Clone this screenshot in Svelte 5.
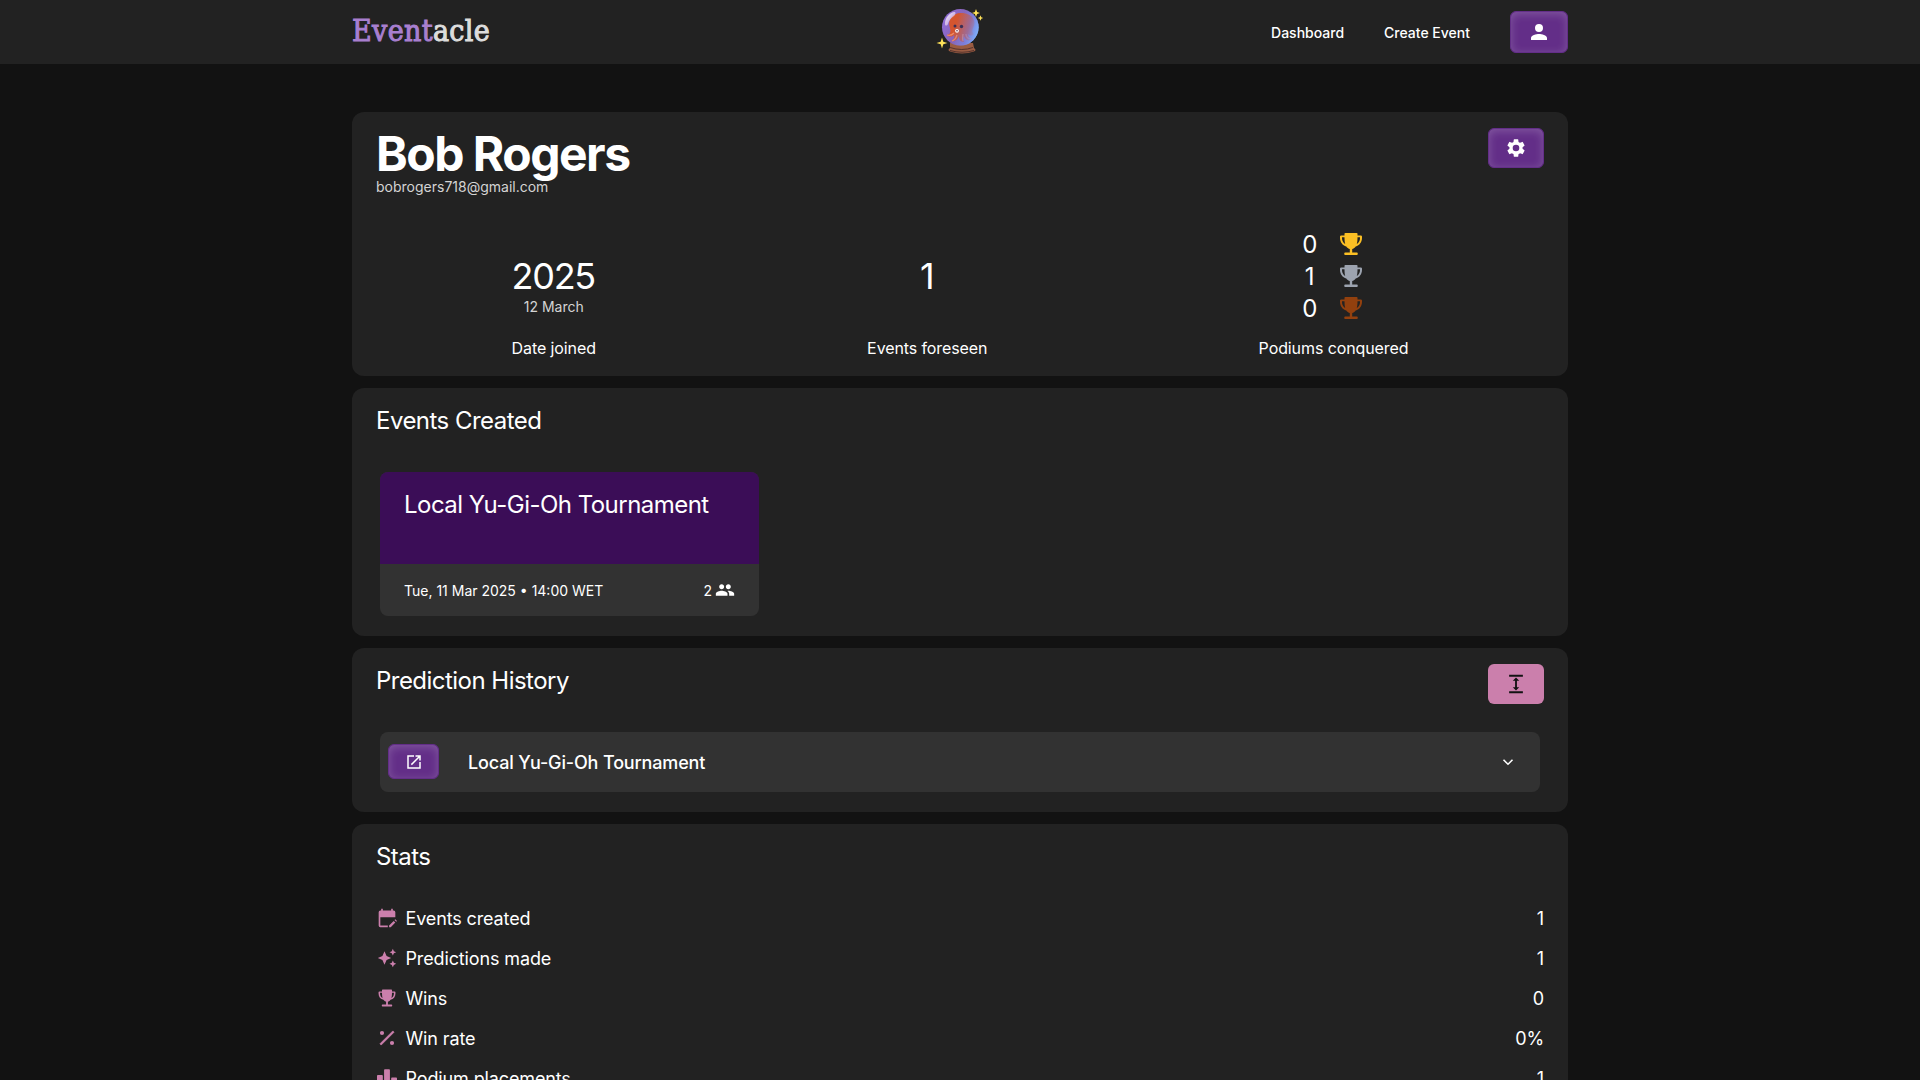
<script>
  const trophy = 'M5.300 0H16.700q.8 0 .8.800V2.400h3.300q1.200 0 1.200 1.200V5c0 4-2.500 7.500-6.300 8.400-.9 1.300-2.100 2.100-3.500 2.600v3.500h4.600q1 0 1 1.200t-1 1.300H5.200q-1 0-1-1.200t1-1.300h4.600V16c-1.400-.5-2.600-1.300-3.500-2.600C2.500 12.500 0 9 0 5V3.600q0-1.200 1.200-1.200h3.300V.8q0-.8.8-.8ZM2 4.300V5c0 2.700 1.300 4.900 3.200 5.900C4.700 9.300 4.500 7 4.500 4.300ZM20 4.300V5c0 2.700-1.300 4.900-3.200 5.900.5-1.600.7-3.900.7-6.600Z';
  const podiums = [
    { count: 0, tone: 'gold' },
    { count: 1, tone: 'silver' },
    { count: 0, tone: 'bronze' }
  ];
  const stats = [
    { icon: 'calendar', label: 'Events created', value: '1' },
    { icon: 'sparkle', label: 'Predictions made', value: '1' },
    { icon: 'trophy', label: 'Wins', value: '0' },
    { icon: 'percent', label: 'Win rate', value: '0%' },
    { icon: 'podium', label: 'Podium placements', value: '1' }
  ];
</script>

<header>
  <div class="bar">
    <a class="brand" href="#home"><b>Event</b>acle</a>
    <svg class="orb" viewBox="0 0 50 54" aria-hidden="true">
      <defs>
        <linearGradient id="glass" x1="0" y1=".2" x2="1" y2=".6">
          <stop offset="0" stop-color="#8f6fdc" /><stop offset=".5" stop-color="#8a62b4" /><stop offset="1" stop-color="#7ba2f2" />
        </linearGradient>
        <linearGradient id="side" x1="0" y1=".2" x2="1" y2=".5">
          <stop offset=".4" stop-color="#7a78d8" stop-opacity="0" /><stop offset=".75" stop-color="#7a78d8" stop-opacity=".6" /><stop offset="1" stop-color="#7eaaf5" />
        </linearGradient>
        <linearGradient id="shine" x1="0" y1="0" x2="1" y2="1">
          <stop offset="0" stop-color="#fff" /><stop offset="1" stop-color="#d9b4ea" stop-opacity=".4" />
        </linearGradient>
      </defs>
      <path d="M14 39h23l1 5q3 2 0 3.500-12 4-24 0-3-1.500 0-3.500z" fill="#9a5c42" />
      <path d="M14 43.500q12 4 23 0M14 46.500q12 3.500 24 0" stroke="#56332c" fill="none" />
      <circle cx="24.300" cy="23.300" r="18.300" fill="url(#glass)" />
      <path d="M14 24c-3-9 3-16 13-15 10 1 14 9 10 15-1 3-1 4 1 6-2 2-4 2-6 0 0 3 2 4 4 5-3 3-7 1-8-3-1 2-1 4 0 6-4 0-5-3-5-6-1 3-3 5-7 5 2-2 3-4 2-6-2 2-5 2-7 0 3 0 4-3 3-7z" fill="#d4552f" />
      <path d="M11 31c3 1 5 0 7-2M16 37c3-1 4-3 5-6m6 6c-1-3 0-5 0-7m9 5c-4 0-6-2-6-5" stroke="#f08a66" stroke-width="1.300" fill="none" />
      <circle cx="24.300" cy="23.300" r="18.300" fill="url(#side)" />
      <circle cx="19" cy="22" r="1.500" fill="#3b2f55" /><circle cx="25.500" cy="22.500" r="1.700" fill="#3b2f55" />
      <circle cx="21" cy="26.800" r="1.900" fill="#fff" /><circle cx="21" cy="26.800" r=".8" fill="#563450" />
      <path d="M9 20c0-6 4-11 9-12 2 0 2 2 0 4-4 3-5 5-6 8-1 2-3 2-3 0z" fill="url(#shine)" />
      <path d="m6 33.500 1.300 4.200L11.500 39l-4.200 1.300L6 44.500l-1.300-4.200L.5 39l4.200-1.300zM40 5l1.100 2.900L44 9l-2.900 1.100L40 13l-1.100-2.900L36 9l2.900-1.100zM44.500 11.300l.8 1.900 1.900.8-1.900.8-.8 1.900-.8-1.900-1.900-.8 1.900-.8z" fill="#ffe259" />
    </svg>
    <nav>
      <a href="#dashboard">Dashboard</a>
      <a href="#create">Create Event</a>
      <button class="purple user" aria-label="Profile">
        <svg viewBox="0 0 24 24"><path d="M12 12a4 4 0 1 0 0-8 4 4 0 0 0 0 8Zm0 2c-2.670 0-8 1.340-8 4v2h16v-2c0-2.660-5.330-4-8-4Z" /></svg>
      </button>
    </nav>
  </div>
</header>

<main>
  <section class="profile">
    <div class="top">
      <div>
        <h1>Bob Rogers</h1>
        <p class="email">bobrogers718@gmail.com</p>
      </div>
      <button class="purple" aria-label="Settings">
        <svg viewBox="0 0 24 24"><path d="M19.140 12.940c.04-.3.060-.61.060-.94s-.02-.64-.07-.94l2.030-1.580a.49.490 0 0 0 .12-.61l-1.920-3.320a.49.490 0 0 0-.59-.22l-2.390.96a7 7 0 0 0-1.620-.94l-.36-2.540a.48.480 0 0 0-.48-.41h-3.840a.48.480 0 0 0-.47.410l-.36 2.540c-.59.240-1.130.57-1.620.94l-2.390-.96a.48.480 0 0 0-.59.220L2.740 8.870a.48.480 0 0 0 .12.610l2.030 1.580a6 6 0 0 0 0 1.880l-2.030 1.580a.49.490 0 0 0-.12.610l1.920 3.320c.12.220.37.290.59.220l2.390-.96c.5.380 1.030.7 1.620.94l.36 2.540c.05.240.24.410.48.410h3.840c.24 0 .44-.17.470-.41l.36-2.540a7 7 0 0 0 1.620-.94l2.390.96c.22.080.47 0 .59-.22l1.920-3.320a.49.490 0 0 0-.12-.61ZM12 15.600a3.600 3.600 0 1 1 0-7.200 3.600 3.600 0 0 1 0 7.200Z" /></svg>
      </button>
    </div>
    <div class="facts">
      <div class="fact">
        <div class="figure"><span class="big">2025</span><span class="small">12 March</span></div>
        <span class="caption">Date joined</span>
      </div>
      <div class="fact">
        <div class="figure"><span class="big">1</span></div>
        <span class="caption">Events foreseen</span>
      </div>
      <div class="fact">
        <div class="podiums">
          {#each podiums as podium}
            <div class="podium">
              <span>{podium.count}</span>
              <svg class={podium.tone} viewBox="-1 -1 24 24"><path fill-rule="evenodd" d={trophy} /></svg>
            </div>
          {/each}
        </div>
        <span class="caption">Podiums conquered</span>
      </div>
    </div>
  </section>

  <section class="created">
    <h2>Events Created</h2>
    <article>
      <h3>Local Yu-Gi-Oh Tournament</h3>
      <footer>
        <span class="text">Tue, 11 Mar 2025 • 14:00 WET</span>
        <span class="people"><span class="text">2</span>
          <svg viewBox="0 0 24 24"><path d="M16 11c1.660 0 2.990-1.340 2.990-3S17.660 5 16 5s-3 1.340-3 3 1.340 3 3 3Zm-8 0c1.660 0 2.990-1.340 2.990-3S9.660 5 8 5 5 6.340 5 8s1.340 3 3 3Zm0 2c-2.330 0-7 1.170-7 3.500V19h14v-2.500c0-2.330-4.670-3.500-7-3.500Zm8 0c-.29 0-.62.020-.97.050 1.160.84 1.970 1.970 1.970 3.450V19h6v-2.500c0-2.330-4.670-3.500-7-3.500Z" /></svg>
        </span>
      </footer>
    </article>
  </section>

  <section class="history">
    <div class="top">
      <h2>Prediction History</h2>
      <button class="pink" aria-label="Expand all">
        <svg viewBox="0 0 24 24"><path d="M4.500 2h15v2h-15ZM4.500 20h15v2h-15ZM13 8.500v7h2.500L12 19l-3.500-3.500H11v-7H8.500L12 5l3.500 3.500Z" /></svg>
      </button>
    </div>
    <div class="prediction">
      <button class="purple open" aria-label="Open event">
        <svg viewBox="0 0 24 24"><path d="M19 19H5V5h7V3H3v18h18v-9h-2ZM14 3v2h3.590l-9.830 9.830 1.410 1.410L19 6.410V10h2V3Z" /></svg>
      </button>
      <span>Local Yu-Gi-Oh Tournament</span>
      <svg class="chevron" viewBox="0 0 16 16"><path d="m4 6 4 4 4-4" /></svg>
    </div>
  </section>

  <section class="stats">
    <h2>Stats</h2>
    <ul>
      {#each stats as stat}
        <li>
          {#if stat.icon === 'trophy'}
            <svg viewBox="-2 -2 26 26"><path fill-rule="evenodd" d={trophy} /></svg>
          {:else}
            <svg viewBox="0 0 24 24">
              {#if stat.icon === 'calendar'}
                <path d="M5 1h2v2h10V1h2v2h1a2 2 0 0 1 2 2v6H4v10h9v2H4a2 2 0 0 1-2-2V5a2 2 0 0 1 2-2h1ZM14.500 21l5.500-5.500 2 2-5.500 5.500h-2ZM21 14.500l1-1 2 2-1 1Z" />
              {:else if stat.icon === 'sparkle'}
                <path d="m9 4 2.500 5.500L17 12l-5.500 2.500L9 20l-2.500-5.500L1 12l5.500-2.500ZM19 1l1.250 2.750L23 5l-2.750 1.250L19 9l-1.250-2.750L15 5l2.750-1.250ZM19 15l1.250 2.750L23 19l-2.750 1.250L19 23l-1.250-2.750L15 19l2.750-1.250Z" />
              {:else if stat.icon === 'percent'}
                <path d="M19 3.500 20.500 5 5 20.500 3.500 19Z" stroke="currentColor" stroke-width=".8" /><circle cx="6" cy="6" r="2.500" /><circle cx="18" cy="18" r="2.500" />
              {:else}
                <path d="M0 9.500q0-1 1-1h5q1 0 1 1V23H0ZM8.500 2.500q0-1 1-1h5q1 0 1 1V23h-7ZM17 12.500q0-1 1-1h5q1 0 1 1V23h-7Z" />
              {/if}
            </svg>
          {/if}
          <span class="text">{stat.label}</span>
          <span class="value text">{stat.value}</span>
        </li>
      {/each}
    </ul>
  </section>
</main>

<style>
  :global(body) {
    background: #121212;
    color: #fff;
    font: 16px/24px Inter, "Liberation Sans", sans-serif;
  }
  :global(#app) { height: 1080px; overflow: hidden; }
  h1, h2, h3, p, ul { margin: 0; padding: 0; font-weight: 400; }
  svg { fill: currentColor; display: block; flex: none; }
  a { color: inherit; text-decoration: none; }
  header { background: #222; height: 64px; }
  .bar {
    width: 1216px;
    height: 64px;
    margin: 0 auto;
    display: grid;
    grid-template-columns: 1fr 50px 1fr;
    align-items: center;
  }
  .brand {
    font: 400 30px/36px "DejaVu Serif Condensed", "DejaVu Serif", serif;
    font-stretch: condensed;
    letter-spacing: .35px;
    -webkit-text-stroke: 1px currentColor;
    color: #ddd;
    padding-bottom: 3px;
  }
  .brand b { color: #a87fcf; font-weight: inherit; }
  .orb { width: 50px; height: 54px; margin: -2px 0 0 1px; }
  nav { display: flex; justify-content: flex-end; align-items: center; gap: 40px; font-size: 14px; font-weight: 500; }
  nav a, .text { padding-top: 2px; }
  button {
    width: 56px;
    height: 40px;
    padding: 0;
    border: 0;
    border-radius: 6px;
    display: flex;
    align-items: center;
    justify-content: center;
    color: #fff;
    flex: none;
  }
  button svg { width: 22px; height: 22px; }
  .purple {
    background: #632e88;
    border: 1px solid #632e88;
    box-sizing: border-box;
    box-shadow: inset 0 2px 10px rgba(255, 255, 255, .2);
  }
  .user { width: 58px; height: 42px; }
  .user svg { width: 24px; height: 24px; }
  main { width: 1216px; margin: 48px auto 0; display: flex; flex-direction: column; gap: 12px; }
  section { background: #222; border-radius: 12px; padding: 16px 24px; box-sizing: border-box; }
  .top { display: flex; justify-content: space-between; align-items: flex-start; }
  h1 { font-size: 48px; line-height: 48px; font-weight: 700; letter-spacing: -1.500px; padding-top: 2px; margin-bottom: -1px; }
  .email { font-size: 14px; line-height: 20px; color: #d4d4d4; }
  .profile { height: 264px; }
  .facts { display: flex; justify-content: space-around; margin-top: 31px; }
  .fact { display: flex; flex-direction: column; align-items: center; gap: 12px; }
  .caption { letter-spacing: -.1px; }
  .figure { height: 96px; display: flex; flex-direction: column; justify-content: center; align-items: center; }
  .big { font-size: 36px; line-height: 40px; letter-spacing: -1.300px; padding-right: 1px; }
  .small { font-size: 14px; line-height: 20px; color: #d4d4d4; margin: 1px 0 -21px; }
  .podium { display: flex; gap: 21px; height: 32px; align-items: center; font-size: 24px; margin-right: 3px; }
  .podium span { width: 16px; text-align: center; padding-top: 2px; letter-spacing: -.5px; }
  .podium svg { width: 24px; height: 24px; }
  .gold { color: #fbbf24; }
  .silver { color: #9ca3af; }
  .bronze { color: #92400e; }
  h2 { font-size: 24px; line-height: 32px; letter-spacing: -.53px; padding-top: 1px; }
  .created { height: 248px; }
  article { width: 379px; height: 144px; margin: 35px 0 0 4px; background: #323232; border-radius: 8px; overflow: hidden; }
  h3 { box-sizing: border-box; height: 92px; padding: 17px 24px; background: #3b0d57; font-size: 24px; line-height: 32px; letter-spacing: -.53px; }
  footer { height: 52px; padding: 0 24px; display: flex; justify-content: space-between; align-items: center; font-size: 14px; }
  .people { display: flex; align-items: center; gap: 4px; }
  .people svg { width: 20px; height: 20px; margin-left: -1px; }
  .history { height: 164px; }
  .pink { background: #cb7fac; color: #121212; }
  .prediction {
    display: flex;
    align-items: flex-start;
    margin: 28px 4px 0;
    height: 60px;
    box-sizing: border-box;
    padding: 12px 23px 0 8px;
    background: #323232;
    border-radius: 8px;
    font-size: 18px;
    font-weight: 500;
    line-height: 36px;
    letter-spacing: -.15px;
  }
  .prediction span { flex: 1; padding: 1px 0 0 29px; }
  .open { width: 51px; height: 35px; }
  .open svg { width: 18px; height: 18px; }
  .chevron { width: 18px; height: 18px; margin-top: 9px; fill: none; stroke: currentColor; stroke-width: 1.400; }
  .stats { height: 400px; }
  ul { list-style: none; margin-top: 25px; }
  li { display: flex; align-items: center; gap: 8.500px; height: 40px; font-size: 18px; letter-spacing: -.13px; }
  li svg { width: 20px; height: 20px; margin-left: 1px; color: #cb7fac; }
  .value { margin-left: auto; }
</style>
